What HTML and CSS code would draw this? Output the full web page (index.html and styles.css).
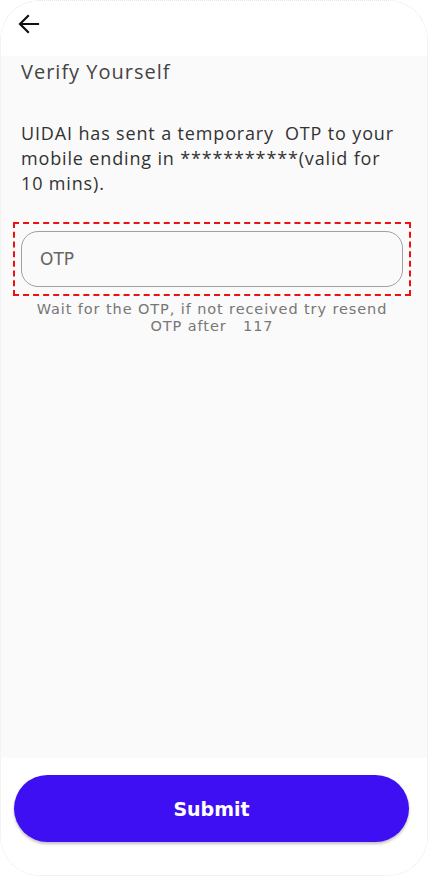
FILE: index.html
```html
<!DOCTYPE html>
<html>
<head>
<meta charset="utf-8">
<link rel="stylesheet" href="styles.css">
</head>
<body>
<div class="screen">
  <header class="topbar">
    <button class="back" aria-label="Back">
      <svg width="22" height="20" viewBox="0 0 22 20"><path d="M20 10H3M10 2L2 10l8 8" fill="none" stroke="#111" stroke-width="2.2" stroke-linecap="square"/></svg>
    </button>
  </header>
  <main class="content">
    <h1 class="title">Verify Yourself</h1>
    <p class="message">UIDAI has sent a temporary&nbsp; OTP to your mobile ending in ***********(valid for 10 mins).</p>
    <div class="focus-box">
      <div class="otp-input">OTP</div>
    </div>
    <p class="hint"><span class="hint-line">Wait for the OTP, if not received try resend</span><span class="hint-line">OTP after &nbsp; 117</span></p>
  </main>
  <footer class="footer">
    <button class="submit">Submit</button>
  </footer>
</div>
</body>
</html>
```
FILE: styles.css
```css
* { box-sizing: border-box; }
html, body { margin: 0; padding: 0; background: #fff; }
body { width: 432px; height: 876px; overflow: hidden; }
.screen {
  width: 428px;
  height: 876px;
  display: flex;
  flex-direction: column;
  background: #fff;
  border-radius: 40px;
  border: 1px dotted #e6e6e6;
  overflow: hidden;
}
.topbar {
  height: 55px;
  flex: none;
  display: flex;
  align-items: center;
  padding-left: 17px;
  background: #fff;
}
.back {
  border: 0; background: none; padding: 0; margin-top: -10px;
  width: 24px; height: 22px; display: flex; align-items: center;
}
.content {
  flex: 1;
  background: #fafafa;
  padding: 0 24px 0 20px;
}
.title {
  margin: 2px 0 0 0;
  font-family: "Open Sans", sans-serif;
  font-weight: 400;
  font-size: 20px;
  line-height: 28px;
  letter-spacing: 1px;
  color: #444;
}
.message {
  margin: 35px 0 0 0;
  font-family: "Open Sans", sans-serif;
  font-size: 18px;
  line-height: 25px;
  letter-spacing: 0.85px;
  color: #333;
}
.focus-box {
  margin: 26px -8px 0 -8px;
  border: 2px dashed #ee1111;
  padding: 7px 6px;
}
.otp-input {
  height: 56px;
  border: 1px solid #a0a0a0;
  border-radius: 17px;
  padding-left: 18px;
  display: flex;
  align-items: center;
  font-family: "DejaVu Sans", sans-serif;
  font-size: 17px;
  color: #666;
}
.hint {
  margin: 5px -14px 0 -14px;
  text-align: center;
  font-family: "DejaVu Sans", sans-serif;
  font-size: 14.5px;
  line-height: 17px;
  letter-spacing: 0.9px;
  color: #777;
  font-weight: 400;
}
.hint-line { display: block; }
.footer {
  height: 117px;
  flex: none;
  background: #fff;
  padding: 17px 18px 0 13px;
}
.submit {
  width: 100%;
  height: 67px;
  border: 0;
  border-radius: 34px;
  background: #3f0ff4;
  color: #fff;
  font-family: "DejaVu Sans", sans-serif;
  font-weight: 700;
  font-size: 19px;
  box-shadow: 0 2px 3px rgba(0,0,0,0.25);
}
```
